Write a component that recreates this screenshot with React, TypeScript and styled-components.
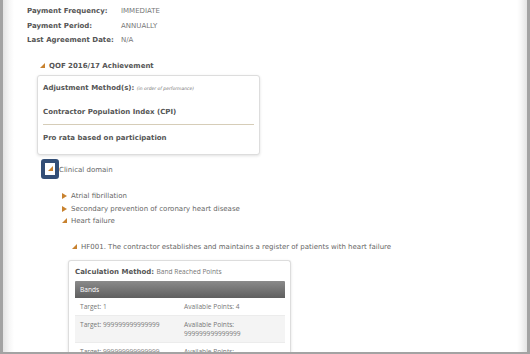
import styled, { createGlobalStyle } from 'styled-components'

const Global = createGlobalStyle`
  html, body {
    margin: 0;
    padding: 0;
    background: #fff;
  }
`

const Frame = styled.div`
  width: 530px;
  height: 354px;
  box-sizing: border-box;
  border-left: 3px solid #a3a3a3;
  border-right: 3px solid #a3a3a3;
  border-bottom: 2px solid #a3a3a3;
  display: flex;
  overflow: hidden;
  font-family: "DejaVu Sans", Verdana, sans-serif;
  color: #555;
`

const Gutter = styled.div<{ side: 'left' | 'right' }>`
  flex: none;
  width: ${p => (p.side === 'left' ? 11 : 10)}px;
  background: linear-gradient(
    to ${p => (p.side === 'left' ? 'right' : 'left')},
    #e4e4e4,
    #f7f7f7 60%,
    #fff
  );
`

const Content = styled.div`
  flex: 1;
  padding: 4px 0 0 13px;
  font-size: 7px;
`

const InfoGrid = styled.div`
  display: grid;
  grid-template-columns: 94px auto;
  line-height: 14.5px;
`

const Label = styled.div`
  font-weight: bold;
  color: #555;
`

const Value = styled.div`
  color: #777;
`

const Gap = styled.div<{ h: number }>`
  height: ${p => p.h}px;
`

const Toggle = styled.div<{ indent: number; bold?: boolean }>`
  display: flex;
  align-items: center;
  gap: 4px;
  margin-left: ${p => p.indent}px;
  line-height: 12.5px;
  font-weight: ${p => (p.bold ? 'bold' : 'normal')};
  color: ${p => (p.bold ? '#555' : '#666')};
`

const Card = styled.div<{ indent: number; pad: string; open?: boolean }>`
  margin-left: ${p => p.indent}px;
  width: 223px;
  box-sizing: border-box;
  padding: ${p => p.pad};
  border: 1px solid #ddd;
  border-bottom: ${p => (p.open ? 'none' : '1px solid #ddd')};
  border-radius: 3px;
  box-shadow: 0 1px 3px rgba(0, 0, 0, 0.12);
  background: #fff;
`

const CardLine = styled.div`
  font-weight: bold;
  color: #555;
  line-height: 12px;
`

const Small = styled.span`
  font-size: 4.5px;
  font-style: italic;
  font-weight: normal;
  color: #777;
`

const Plain = styled.span`
  font-weight: normal;
  font-family: "Open Sans", "Liberation Sans", sans-serif;
  font-size: 6.6px;
  color: #777;
`

const Rule = styled.div`
  height: 1px;
  background: #d6cdb8;
`

const FocusBox = styled.div`
  width: 18px;
  height: 20px;
  box-sizing: border-box;
  border: 4px solid #334e76;
  border-radius: 3px;
  background: #fff;
  display: flex;
  align-items: center;
  justify-content: center;
`

const FocusLabel = styled.span`
  margin-left: -4px;
  padding-top: 3px;
`

const Table = styled.div`
  font-family: "Open Sans", "Liberation Sans", sans-serif;
  font-size: 6.6px;
  color: #777;
`

const TableHead = styled.div`
  height: 17px;
  line-height: 17px;
  padding-left: 5px;
  color: #fff;
  background: linear-gradient(#8a8a8a, #5f5f5f);
  border-radius: 1px 1px 0 0;
`

const TableRow = styled.div<{ shaded?: boolean }>`
  display: grid;
  grid-template-columns: 104px 1fr;
  padding: 4px 0;
  line-height: 9px;
  background: ${p => (p.shaded ? '#f4f4f4' : '#fff')};
  border-bottom: 1px solid #ececec;
  & > div {
    padding-left: 5px;
  }
`

function Arrow({ open }: { open?: boolean }) {
  return (
    <svg width="5" height="6" viewBox="0 0 5 6" style={{ flex: 'none' }}>
      {open ? (
        <polygon points="5,0 5,5 0,5" fill="#c8822f" />
      ) : (
        <polygon points="0,0 5,3 0,6" fill="#c8822f" />
      )}
    </svg>
  )
}

export default function App() {
  return (
    <>
      <Global />
      <Frame>
        <Gutter side="left" />
        <Content>
          <InfoGrid>
            <Label>Payment Frequency:</Label>
            <Value>IMMEDIATE</Value>
            <Label>Payment Period:</Label>
            <Value>ANNUALLY</Value>
            <Label>Last Agreement Date:</Label>
            <Value>N/A</Value>
          </InfoGrid>

          <Gap h={12} />
          <Toggle indent={13} bold>
            <Arrow open />
            QOF 2016/17 Achievement
          </Toggle>

          <Gap h={3} />
          <Card indent={10} pad="6px 5px 10px">
            <CardLine>
              Adjustment Method(s): <Small>(in order of performance)</Small>
            </CardLine>
            <Gap h={11} />
            <CardLine>Contractor Population Index (CPI)</CardLine>
            <Gap h={6} />
            <Rule />
            <Gap h={7} />
            <CardLine>Pro rata based on participation</CardLine>
          </Card>

          <Gap h={4} />
          <Toggle indent={14}>
            <FocusBox>
              <Arrow open />
            </FocusBox>
            <FocusLabel>Clinical domain</FocusLabel>
          </Toggle>

          <Gap h={11} />
          <Toggle indent={35}>
            <Arrow />
            Atrial fibrillation
          </Toggle>
          <Toggle indent={35}>
            <Arrow />
            Secondary prevention of coronary heart disease
          </Toggle>
          <Toggle indent={35}>
            <Arrow open />
            Heart failure
          </Toggle>

          <Gap h={13} />
          <Toggle indent={45}>
            <Arrow open />
            HF001. The contractor establishes and maintains a register of patients with heart failure
          </Toggle>

          <Gap h={7} />
          <Card indent={41} pad="5px 5px 0 6px" open>
            <CardLine>
              Calculation Method: <Plain>Band Reached Points</Plain>
            </CardLine>
            <Gap h={3} />
            <Table>
              <TableHead>Bands</TableHead>
              <TableRow>
                <div>Target: 1</div>
                <div>Available Points: 4</div>
              </TableRow>
              <TableRow shaded>
                <div>Target: 999999999999999</div>
                <div>
                  Available Points:
                  <br />
                  999999999999999
                </div>
              </TableRow>
              <TableRow>
                <div>Target: 999999999999999</div>
                <div>
                  Available Points:
                  <br />
                  999999999999999
                </div>
              </TableRow>
            </Table>
          </Card>
        </Content>
        <Gutter side="right" />
      </Frame>
    </>
  )
}
